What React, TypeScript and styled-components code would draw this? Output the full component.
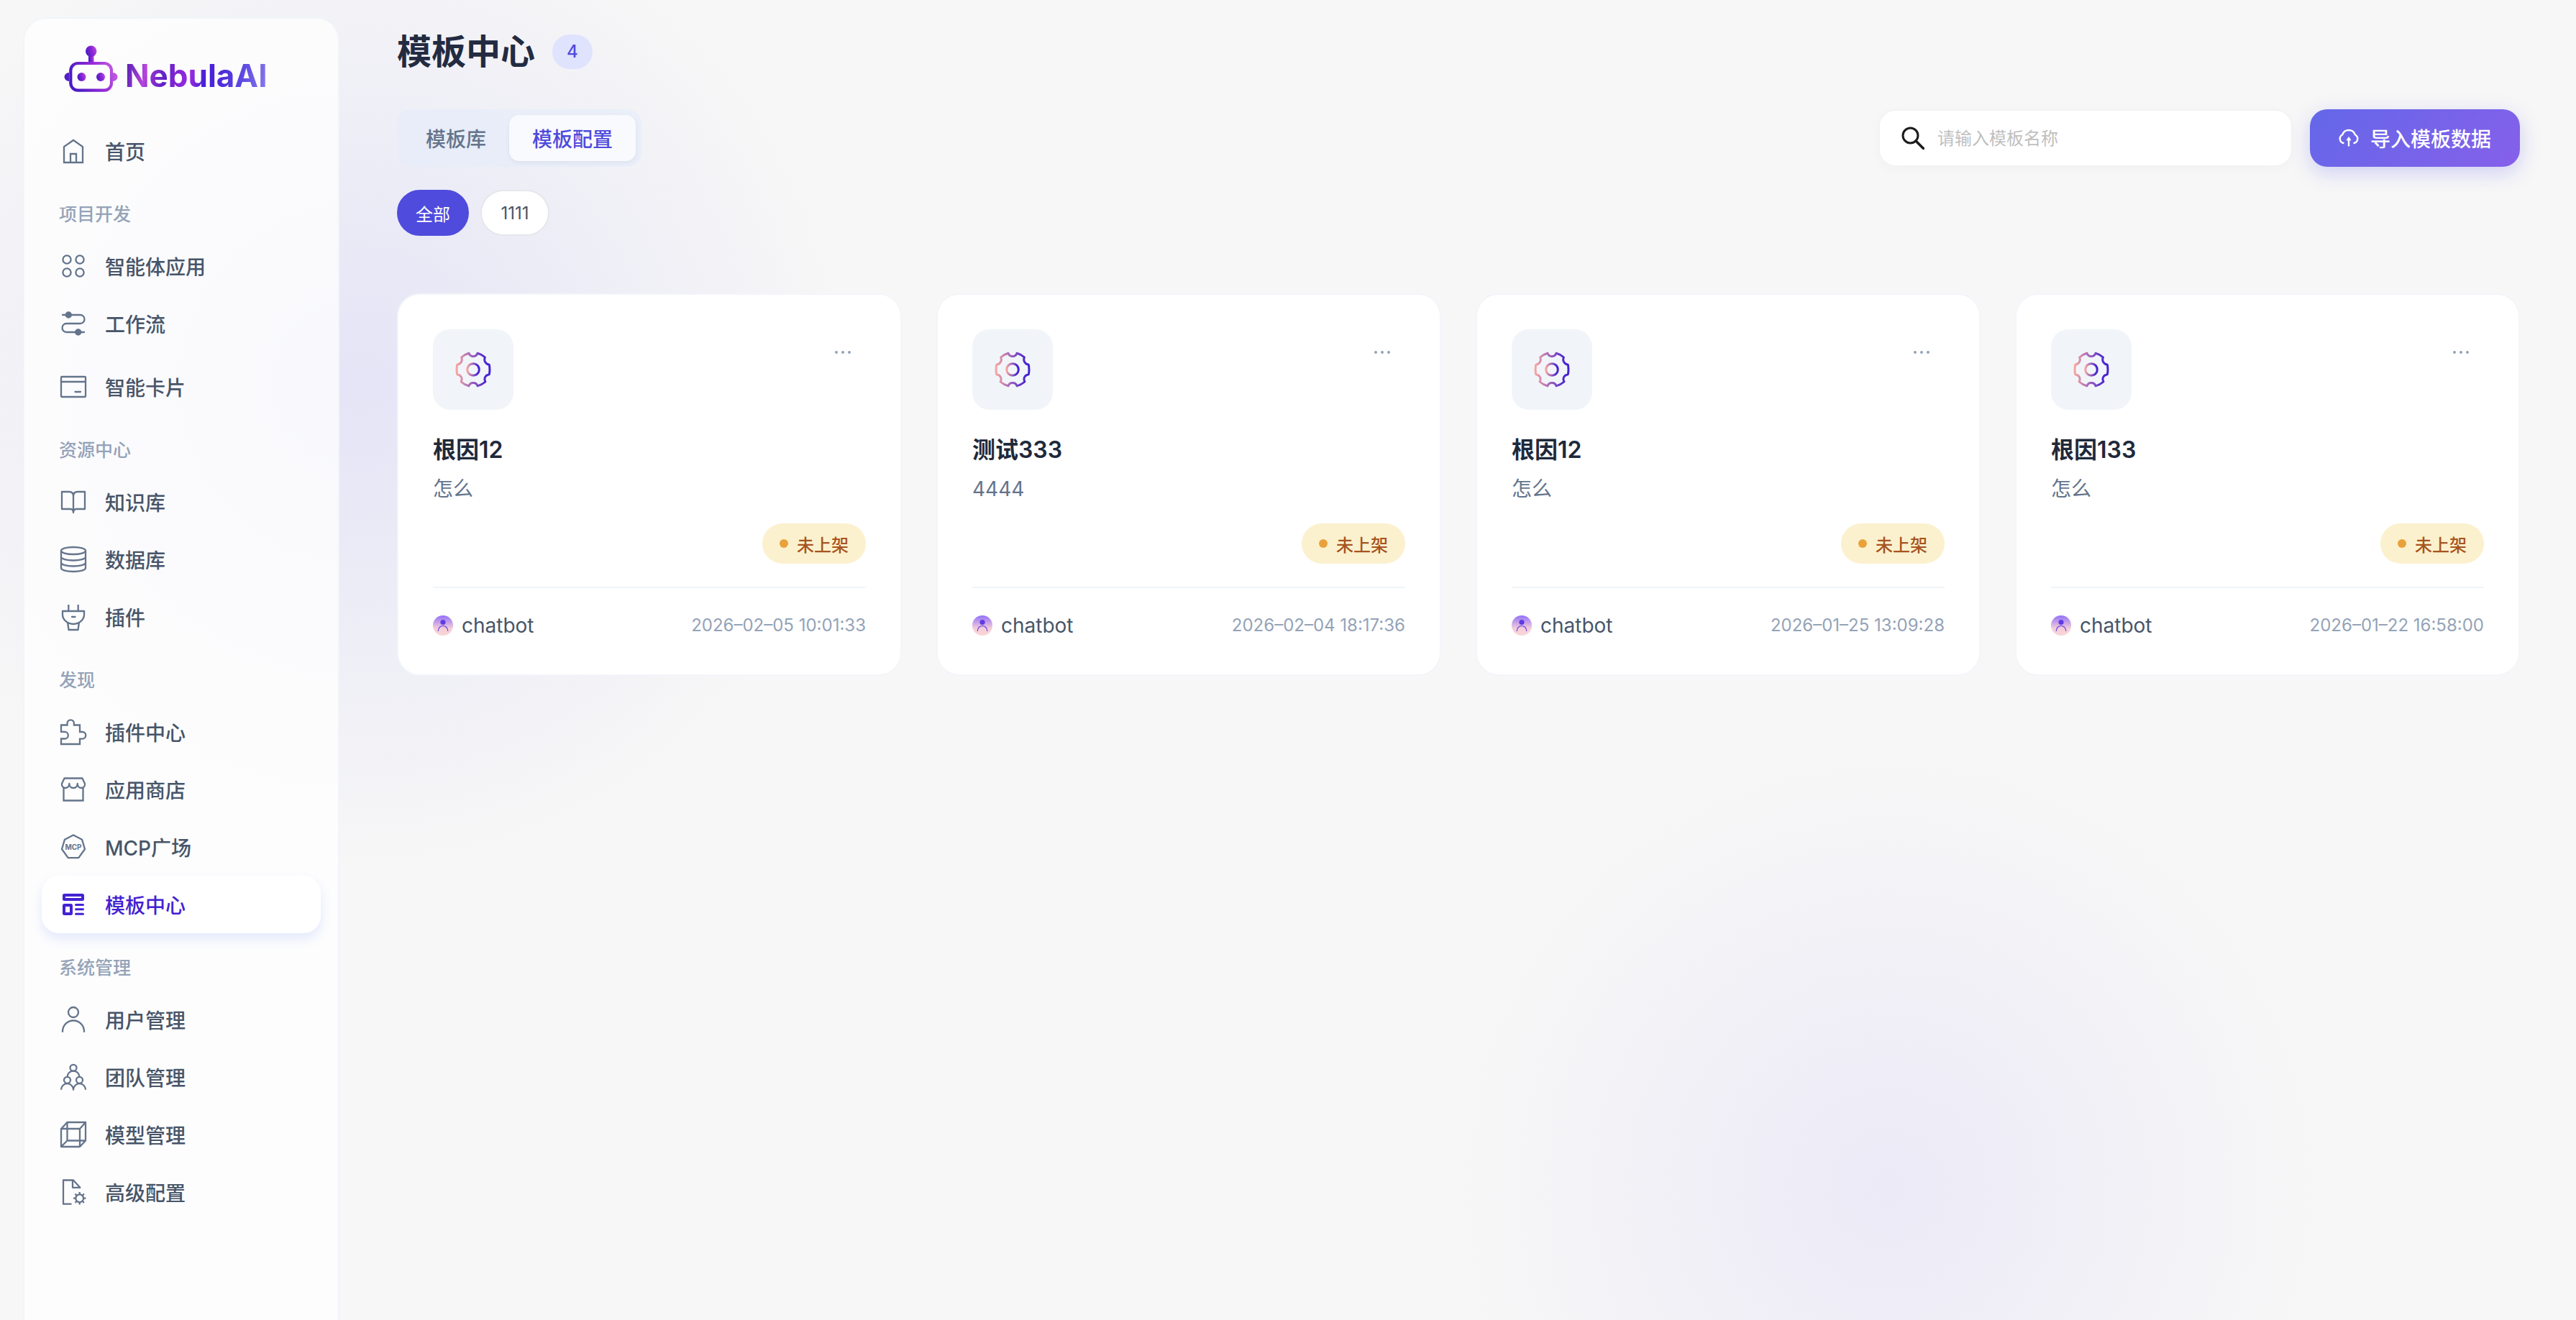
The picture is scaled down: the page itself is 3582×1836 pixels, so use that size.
import React from "react";
import styled, { createGlobalStyle, css } from "styled-components";

const GlobalStyle = createGlobalStyle`
  * { box-sizing: border-box; }
  body {
    margin: 0;
    background: #f7f7f7;
    font-family: Inter, "Noto Sans CJK SC", sans-serif;
    color: #1e293b;
    -webkit-font-smoothing: antialiased;
  }
  button, input { font-family: inherit; }
  h1, h2, p { margin: 0; }
`;

const Shell = styled.div`
  display: flex;
  height: 100vh;
  overflow: hidden;
  padding: 24px 0 0 32px;
  background-color: #f7f7f7;
  background-image:
    radial-gradient(circle 680px at 14% 29%, rgba(99, 102, 241, 0.13), rgba(99, 102, 241, 0)),
    radial-gradient(circle 610px at 73.3% 90%, rgba(122, 102, 246, 0.09), rgba(122, 102, 246, 0));
`;

/* ---------- Sidebar ---------- */

const Sidebar = styled.aside`
  flex: none;
  width: 440px;
  padding: 0 24px;
  border: 2px solid #f1f5f9;
  border-bottom: 0;
  border-radius: 32px 32px 0 0;
  background: rgba(255, 255, 255, 0.76);
`;

const Brand = styled.a`
  display: flex;
  align-items: flex-end;
  gap: 8px;
  height: 144px;
  padding: 36px 30px 40px;
  text-decoration: none;
`;

const BrandName = styled.span`
  font-size: 44px;
  font-weight: 700;
  line-height: 50px;
  color: transparent;
  background: linear-gradient(
    100deg,
    #5b21b6 2%,
    #b844dc 15%,
    #9232d0 19%,
    #5b20c8 30%,
    #7522d0 33%,
    #9a2ae0 46%,
    #4620d8 56%,
    #4f2cd8 68%,
    #5b48e0 80%,
    #8576ec 98%
  );
  -webkit-background-clip: text;
  background-clip: text;
`;

const GroupLabel = styled.h2`
  height: 80px;
  padding: 28px 24px 12px;
  font-size: 25px;
  font-weight: 500;
  line-height: 40px;
  color: #94a3b8;
`;

const NavLink = styled.a<{ $active?: boolean; $spaced?: boolean }>`
  display: flex;
  align-items: center;
  gap: 24px;
  height: 80px;
  padding: 0 24px;
  margin-top: ${(p) => (p.$spaced ? "8px" : "0")};
  border-radius: 24px;
  font-size: 28px;
  font-weight: 500;
  color: #475569;
  text-decoration: none;

  svg {
    flex: none;
    color: #64748b;
  }

  ${(p) =>
    p.$active &&
    css`
      background: #fff;
      color: #4422d2;
      box-shadow: 0 8px 16px rgba(79, 110, 250, 0.14);
      svg {
        color: #4422d2;
      }
    `}
`;

/* ---------- Main ---------- */

const Main = styled.main`
  flex: 1;
  min-width: 0;
  padding: 24px 78px 0 80px;
`;

const TitleRow = styled.header`
  display: flex;
  align-items: center;
  gap: 24px;
  height: 48px;
`;

const Title = styled.h1`
  font-size: 48px;
  font-weight: 600;
  line-height: 48px;
  color: #232b41;
`;

const Count = styled.span`
  padding: 0 20px;
  border-radius: 24px;
  background: #dfe3fd;
  color: #4f4bdc;
  font-size: 24px;
  font-weight: 500;
  line-height: 48px;
`;

const Toolbar = styled.div`
  display: flex;
  align-items: center;
  justify-content: space-between;
  margin-top: 56px;
`;

const Tabs = styled.div`
  display: flex;
  padding: 8px;
  border-radius: 20px;
  background: rgba(230, 236, 249, 0.7);
`;

const Tab = styled.button<{ $active?: boolean }>`
  height: 64px;
  padding: 0 32px;
  border: 0;
  border-radius: 14px;
  background: transparent;
  color: #64748b;
  font-size: 28px;
  font-weight: 500;
  ${(p) =>
    p.$active &&
    css`
      background: rgba(255, 255, 255, 0.7);
      color: #4f4bdc;
      box-shadow: 0 2px 6px rgba(15, 23, 42, 0.06);
    `}
`;

const Actions = styled.div`
  display: flex;
  gap: 24px;
`;

const SearchBox = styled.label`
  display: flex;
  align-items: center;
  gap: 18px;
  width: 576px;
  height: 80px;
  padding: 0 30px;
  border: 2px solid #f3f3f4;
  border-radius: 24px;
  background: #fff;
  box-shadow: 0 4px 16px rgba(0, 0, 0, 0.025);
`;

const SearchInput = styled.input`
  flex: 1;
  min-width: 0;
  padding: 2px 0 0;
  border: 0;
  outline: 0;
  background: transparent;
  font-size: 24px;
  line-height: 36px;
  color: #1e293b;
  &::placeholder {
    color: #bfbfbf;
    opacity: 1;
  }
`;

const PrimaryButton = styled.button`
  display: flex;
  align-items: center;
  gap: 16px;
  height: 80px;
  padding: 0 40px;
  border: 0;
  border-radius: 24px;
  background: linear-gradient(135deg, #6467e9, #8660ea);
  box-shadow: 0 8px 28px rgba(99, 102, 241, 0.28);
  color: #fff;
  font-size: 28px;
  font-weight: 500;
`;

const Chips = styled.div`
  display: flex;
  gap: 16px;
  margin-top: 32px;
`;

const Chip = styled.button<{ $active?: boolean }>`
  min-width: 96px;
  height: 64px;
  padding: 0 24px;
  border: 2px solid ${(p) => (p.$active ? "#4f4bdc" : "#e5e7eb")};
  border-radius: 32px;
  background: ${(p) => (p.$active ? "#4f4bdc" : "#fff")};
  color: ${(p) => (p.$active ? "#fff" : "#4b5563")};
  font-size: 24px;
`;

const CardGrid = styled.section`
  display: grid;
  grid-template-columns: repeat(auto-fill, minmax(600px, 1fr));
  gap: 48px;
  margin-top: 80px;
`;

const Card = styled.article`
  padding: 48px;
  border: 2px solid #f3f5fa;
  border-radius: 32px;
  background: #fff;
`;

const CardTop = styled.div`
  display: flex;
  align-items: flex-start;
  justify-content: space-between;
`;

const CardIcon = styled.div`
  display: grid;
  place-items: center;
  width: 112px;
  height: 112px;
  border-radius: 24px;
  background: #f1f5f9;
`;

const MoreButton = styled.button`
  display: grid;
  place-items: center;
  width: 64px;
  height: 64px;
  padding: 0;
  border: 0;
  background: transparent;
  color: #94a3b8;
`;

const CardTitle = styled.h2`
  margin-top: 32px;
  font-size: 32px;
  font-weight: 600;
  line-height: 48px;
  color: #1e293b;
`;

const CardText = styled.p`
  margin-top: 8px;
  font-size: 28px;
  line-height: 44px;
  color: #64748b;
`;

const StatusRow = styled.div`
  display: flex;
  justify-content: flex-end;
  padding: 26px 0 32px;
`;

const Status = styled.span`
  display: flex;
  align-items: center;
  gap: 12px;
  height: 56px;
  padding: 0 24px;
  border-radius: 28px;
  background: #fcf1ce;
  color: #a6541f;
  font-size: 24px;
  font-weight: 500;
`;

const StatusDot = styled.i`
  width: 12px;
  height: 12px;
  border-radius: 50%;
  background: #e9a23b;
`;

const CardFooter = styled.footer`
  display: flex;
  align-items: center;
  justify-content: space-between;
  padding-top: 32px;
  border-top: 2px solid #f1f5f9;
  line-height: 40px;
`;

const Owner = styled.span`
  display: flex;
  align-items: center;
  gap: 12px;
  font-size: 28px;
  color: #475569;
`;

const Stamp = styled.time`
  font-size: 24px;
  color: #94a3b8;
`;

/* ---------- Drawings ---------- */

const Icon = ({ children, width = 2.3 }: { children: React.ReactNode; width?: number }) => (
  <svg
    width="40"
    height="40"
    viewBox="0 0 40 40"
    fill="none"
    stroke="currentColor"
    strokeWidth={width}
    strokeLinejoin="round"
    aria-hidden="true"
  >
    {children}
  </svg>
);

const icons = {
  home: (
    <Icon>
      <path d="M7 36V14L20 5l13 9v22zM16 36V24h8v12" strokeLinejoin="miter" />
    </Icon>
  ),
  apps: (
    <Icon>
      <circle cx="11" cy="11" r="5.6" />
      <circle cx="29" cy="11" r="5.6" />
      <circle cx="11" cy="29" r="5.6" />
      <circle cx="29" cy="29" r="5.6" />
    </Icon>
  ),
  flow: (
    <Icon>
      <path d="M5 8h24.500a6 6 0 0 1 0 12h-19a6 6 0 0 0 0 12H35" strokeLinecap="round" />
      <circle cx="13.300" cy="8" r="3.600" fill="currentColor" />
      <circle cx="26.700" cy="32" r="3.600" fill="currentColor" />
    </Icon>
  ),
  card: (
    <Icon>
      <rect x="3" y="6" width="34" height="28" rx="1" />
      <path d="M3 13h34M22.500 27h7.500" strokeLinecap="round" />
    </Icon>
  ),
  book: (
    <Icon>
      <path d="M20 12c0-4-2.500-6-6-6H4v24h12c2.500 0 4 1.500 4 5 0-3.500 1.500-5 4-5h12V6H26c-3.500 0-6 2-6 6zM20 12v23" />
    </Icon>
  ),
  database: (
    <Icon>
      <ellipse cx="20" cy="8" rx="17" ry="5" />
      <path d="M3 8v24c0 2.800 7.600 5 17 5s17-2.200 17-5V8M3 16.500c0 2.800 7.600 5 17 5s17-2.200 17-5M3 24.500c0 2.800 7.600 5 17 5s17-2.200 17-5" />
    </Icon>
  ),
  plug: (
    <Icon>
      <path d="M13.300 3v9M26.700 3v9M5 12h30v5c0 6.500-6.500 13-15 13S5 23.500 5 17zM12 27.500L13.500 38h13L28 27.500" />
      <path d="M18 20h4.500" strokeLinecap="round" />
    </Icon>
  ),
  puzzle: (
    <Icon>
      <path
        d="M3 10.500h8.500V8a4.700 4.700 0 0 1 9.400 0v2.500H29v9.500h3.500a4.800 4.800 0 0 1 0 9.600H29V37H3v-7.500h5a4.800 4.800 0 0 0 0-9.600H3z"
        strokeLinejoin="miter"
      />
    </Icon>
  ),
  store: (
    <Icon>
      <path d="M7.500 4.500h25L36 12c.5 3-1.500 6-4.500 6-3.200 0-5.800-2.200-5.800-6 0 3.800-2.400 6-5.700 6s-5.700-2.200-5.700-6c0 3.800-2.600 6-5.800 6C5.500 18 3.500 15 4 12z" />
      <path d="M6.500 17.500v18h27v-18" strokeLinejoin="miter" />
    </Icon>
  ),
  mcp: (
    <Icon>
      <path d="M20 3.500l12 6.200L36 23l-8.700 12.200H12.700L4 23 8 9.700z" />
      <text
        x="20"
        y="23.500"
        textAnchor="middle"
        fontSize="10"
        fontWeight="700"
        fontFamily="Inter, sans-serif"
        fill="currentColor"
        stroke="none"
      >
        MCP
      </text>
    </Icon>
  ),
  template: (
    <Icon width={4}>
      <rect x="7" y="7" width="26" height="6" rx="0.500" />
      <rect x="7" y="21" width="10" height="12" rx="0.500" />
      <path d="M23.500 20.500h10M23.500 26.700h10M23.500 33.300h10" strokeWidth="3" strokeLinecap="round" />
    </Icon>
  ),
  user: (
    <Icon>
      <circle cx="20" cy="10" r="7" />
      <path d="M5 37.700v-1.200a15 15 0 0 1 30 0v1.200" />
    </Icon>
  ),
  team: (
    <Icon>
      <circle cx="20" cy="7.300" r="4.500" />
      <circle cx="11.500" cy="24.300" r="4.500" />
      <circle cx="28.500" cy="24.300" r="4.500" />
      <path d="M11.500 20a8.500 8.500 0 0 1 17 0M3 37.700a8.500 8.500 0 0 1 17 0 8.500 8.500 0 0 1 17 0" />
    </Icon>
  ),
  cube: (
    <Icon>
      <path d="M3 12h26v25H3zM11.500 3H37v25.500H11.500zM3 12l8.500-9M29 12l8-9M3 37l8.500-8.500M29 37l8-8.500" />
    </Icon>
  ),
  config: (
    <Icon>
      <path d="M17.500 36.700H6V3.500h14l9.300 10.300H19V3.500" />
      <circle cx="28.700" cy="28.700" r="5.400" />
      <path d="M28.700 23v-3M28.700 34.400v3M23 28.700h-3M34.400 28.700h3M24.700 24.700l-2.200-2.200M32.700 32.700l2.200 2.200M24.700 32.700l-2.200 2.200M32.700 24.700l2.200-2.200" />
    </Icon>
  ),
};

const RobotLogo = () => (
  <svg width="78" height="68" viewBox="0 0 78 68" fill="none" aria-hidden="true">
    <defs>
      <linearGradient id="bot" x1="0" y1="0.300" x2="1" y2="0">
        <stop offset="0" stopColor="#4d1cc4" />
        <stop offset="0.550" stopColor="#9428d8" />
        <stop offset="1" stopColor="#c05adc" />
      </linearGradient>
      <linearGradient id="botEar" x1="0" y1="0" x2="78" y2="0" gradientUnits="userSpaceOnUse">
        <stop offset="0" stopColor="#4a1cc4" />
        <stop offset="1" stopColor="#c45ae0" />
      </linearGradient>
    </defs>
    <path d="M8 39a6.500 6 0 0 0 0 12zM69 39a6.500 6 0 0 1 0 12z" fill="url(#botEar)" />
    <rect x="35" y="14" width="7.500" height="12" fill="url(#bot)" />
    <circle cx="38.700" cy="9.300" r="7.700" fill="url(#bot)" />
    <rect x="10.300" y="26" width="56.700" height="37.600" rx="10" stroke="url(#bot)" strokeWidth="4.200" />
    <circle cx="25.500" cy="45" r="6" fill="url(#bot)" />
    <circle cx="52" cy="45" r="6" fill="url(#bot)" />
  </svg>
);

const Gear = ({ id }: { id: string }) => (
  <svg width="56" height="56" viewBox="0 0 56 56" fill="none" strokeWidth="3" strokeLinejoin="round" aria-hidden="true">
    <defs>
      <linearGradient id={id} x1="0" y1="0" x2="1" y2="0">
        <stop offset="0" stopColor="#f6a5a2" />
        <stop offset="0.850" stopColor="#4f28d0" />
        <stop offset="1" stopColor="#4422d4" />
      </linearGradient>
    </defs>
    <path
      stroke={`url(#${id})`}
      d="M22 5.300c1 3.100 3.200 4.400 6 4.400s5-1.300 6-4.400c4 1.200 7.600 3 10.400 5.700-2 4.700.6 9.200 5.900 10.300.9 4.800.9 9 0 13.400-5.300 1.100-7.900 5.300-5.400 10.300-3.400 3-6.900 4.800-10.900 5.900-1-3-3.200-4.300-6-4.300s-5 1.300-6 4.300c-4-1.100-7.500-2.900-10.900-5.900 2.500-5-.1-9.200-5.400-10.300-.9-4.400-.9-8.600 0-13.400 5.300-1.100 7.900-5.600 5.900-10.300C14.400 8.300 18 6.500 22 5.300z"
    />
    <circle cx="28" cy="28" r="8.300" stroke={`url(#${id})`} />
  </svg>
);

const Avatar = ({ id }: { id: string }) => (
  <svg width="28" height="28" viewBox="0 0 28 28" fill="none" aria-hidden="true">
    <defs>
      <linearGradient id={id} x1="0" y1="0" x2="0" y2="1">
        <stop offset="0" stopColor="#9370fa" />
        <stop offset="0.650" stopColor="#f4cdda" />
        <stop offset="1" stopColor="#f9d6d5" />
      </linearGradient>
    </defs>
    <circle cx="14" cy="14" r="14" fill={`url(#${id})`} />
    <circle cx="14" cy="9.500" r="3.600" fill="#5f3be0" />
    <path d="M7.300 22v-.8a6.700 6.700 0 0 1 13.400 0v.8" stroke="#6a45e0" strokeWidth="1.200" />
  </svg>
);

const SearchGlyph = () => (
  <svg width="32" height="32" viewBox="0 0 32 32" fill="none" stroke="#1c1c1e" strokeWidth="3" aria-hidden="true">
    <circle cx="12.500" cy="12.500" r="10.500" />
    <path d="M20 20l10.500 10.500" strokeWidth="3.600" strokeLinecap="round" />
  </svg>
);

const CloudUpload = () => (
  <svg width="28" height="28" viewBox="0 0 28 28" fill="none" stroke="#fff" strokeWidth="2.400" aria-hidden="true">
    <path d="M7.500 21.300A6.400 6.400 0 0 1 5.300 9.200a9.200 9.200 0 0 1 17.400 0A6.400 6.400 0 0 1 20.500 21.300" />
    <path d="M14 25.500V15" />
    <path d="M14 12.500l3 4.500h-6z" fill="#fff" strokeWidth="0.800" />
  </svg>
);

const Dots = () => (
  <svg width="24" height="8" viewBox="0 0 24 8" fill="currentColor" aria-hidden="true">
    <circle cx="3" cy="4" r="2" />
    <circle cx="12" cy="4" r="2" />
    <circle cx="21" cy="4" r="2" />
  </svg>
);

/* ---------- Data ---------- */

type NavItem = { icon: keyof typeof icons; text: string; active?: boolean; spaced?: boolean };

const groups: { label?: string; items: NavItem[] }[] = [
  { items: [{ icon: "home", text: "首页" }] },
  {
    label: "项目开发",
    items: [
      { icon: "apps", text: "智能体应用" },
      { icon: "flow", text: "工作流" },
      { icon: "card", text: "智能卡片", spaced: true },
    ],
  },
  {
    label: "资源中心",
    items: [
      { icon: "book", text: "知识库" },
      { icon: "database", text: "数据库" },
      { icon: "plug", text: "插件" },
    ],
  },
  {
    label: "发现",
    items: [
      { icon: "puzzle", text: "插件中心" },
      { icon: "store", text: "应用商店" },
      { icon: "mcp", text: "MCP广场" },
      { icon: "template", text: "模板中心", active: true },
    ],
  },
  {
    label: "系统管理",
    items: [
      { icon: "user", text: "用户管理" },
      { icon: "team", text: "团队管理" },
      { icon: "cube", text: "模型管理" },
      { icon: "config", text: "高级配置" },
    ],
  },
];

const templates = [
  { title: "根因12", text: "怎么", time: "2026–02–05 10:01:33" },
  { title: "测试333", text: "4444", time: "2026–02–04 18:17:36" },
  { title: "根因12", text: "怎么", time: "2026–01–25 13:09:28" },
  { title: "根因133", text: "怎么", time: "2026–01–22 16:58:00" },
];

export default function App() {
  return (
    <>
      <GlobalStyle />
      <Shell>
        <Sidebar>
          <Brand href="#">
            <RobotLogo />
            <BrandName>NebulaAI</BrandName>
          </Brand>
          <nav>
            {groups.map((group, i) => (
              <React.Fragment key={i}>
                {group.label && <GroupLabel>{group.label}</GroupLabel>}
                {group.items.map((item) => (
                  <NavLink key={item.text} href="#" $active={item.active} $spaced={item.spaced}>
                    {icons[item.icon]}
                    {item.text}
                  </NavLink>
                ))}
              </React.Fragment>
            ))}
          </nav>
        </Sidebar>
        <Main>
          <TitleRow>
            <Title>模板中心</Title>
            <Count>4</Count>
          </TitleRow>
          <Toolbar>
            <Tabs>
              <Tab type="button">模板库</Tab>
              <Tab type="button" $active>
                模板配置
              </Tab>
            </Tabs>
            <Actions>
              <SearchBox>
                <SearchGlyph />
                <SearchInput type="text" placeholder="请输入模板名称" aria-label="请输入模板名称" />
              </SearchBox>
              <PrimaryButton type="button">
                <CloudUpload />
                导入模板数据
              </PrimaryButton>
            </Actions>
          </Toolbar>
          <Chips>
            <Chip type="button" $active>
              全部
            </Chip>
            <Chip type="button">1111</Chip>
          </Chips>
          <CardGrid>
            {templates.map((t, i) => (
              <Card key={i}>
                <CardTop>
                  <CardIcon>
                    <Gear id={`gear${i}`} />
                  </CardIcon>
                  <MoreButton type="button">
                    <Dots />
                  </MoreButton>
                </CardTop>
                <CardTitle>{t.title}</CardTitle>
                <CardText>{t.text}</CardText>
                <StatusRow>
                  <Status>
                    <StatusDot />
                    未上架
                  </Status>
                </StatusRow>
                <CardFooter>
                  <Owner>
                    <Avatar id={`avatar${i}`} />
                    chatbot
                  </Owner>
                  <Stamp>{t.time}</Stamp>
                </CardFooter>
              </Card>
            ))}
          </CardGrid>
        </Main>
      </Shell>
    </>
  );
}
